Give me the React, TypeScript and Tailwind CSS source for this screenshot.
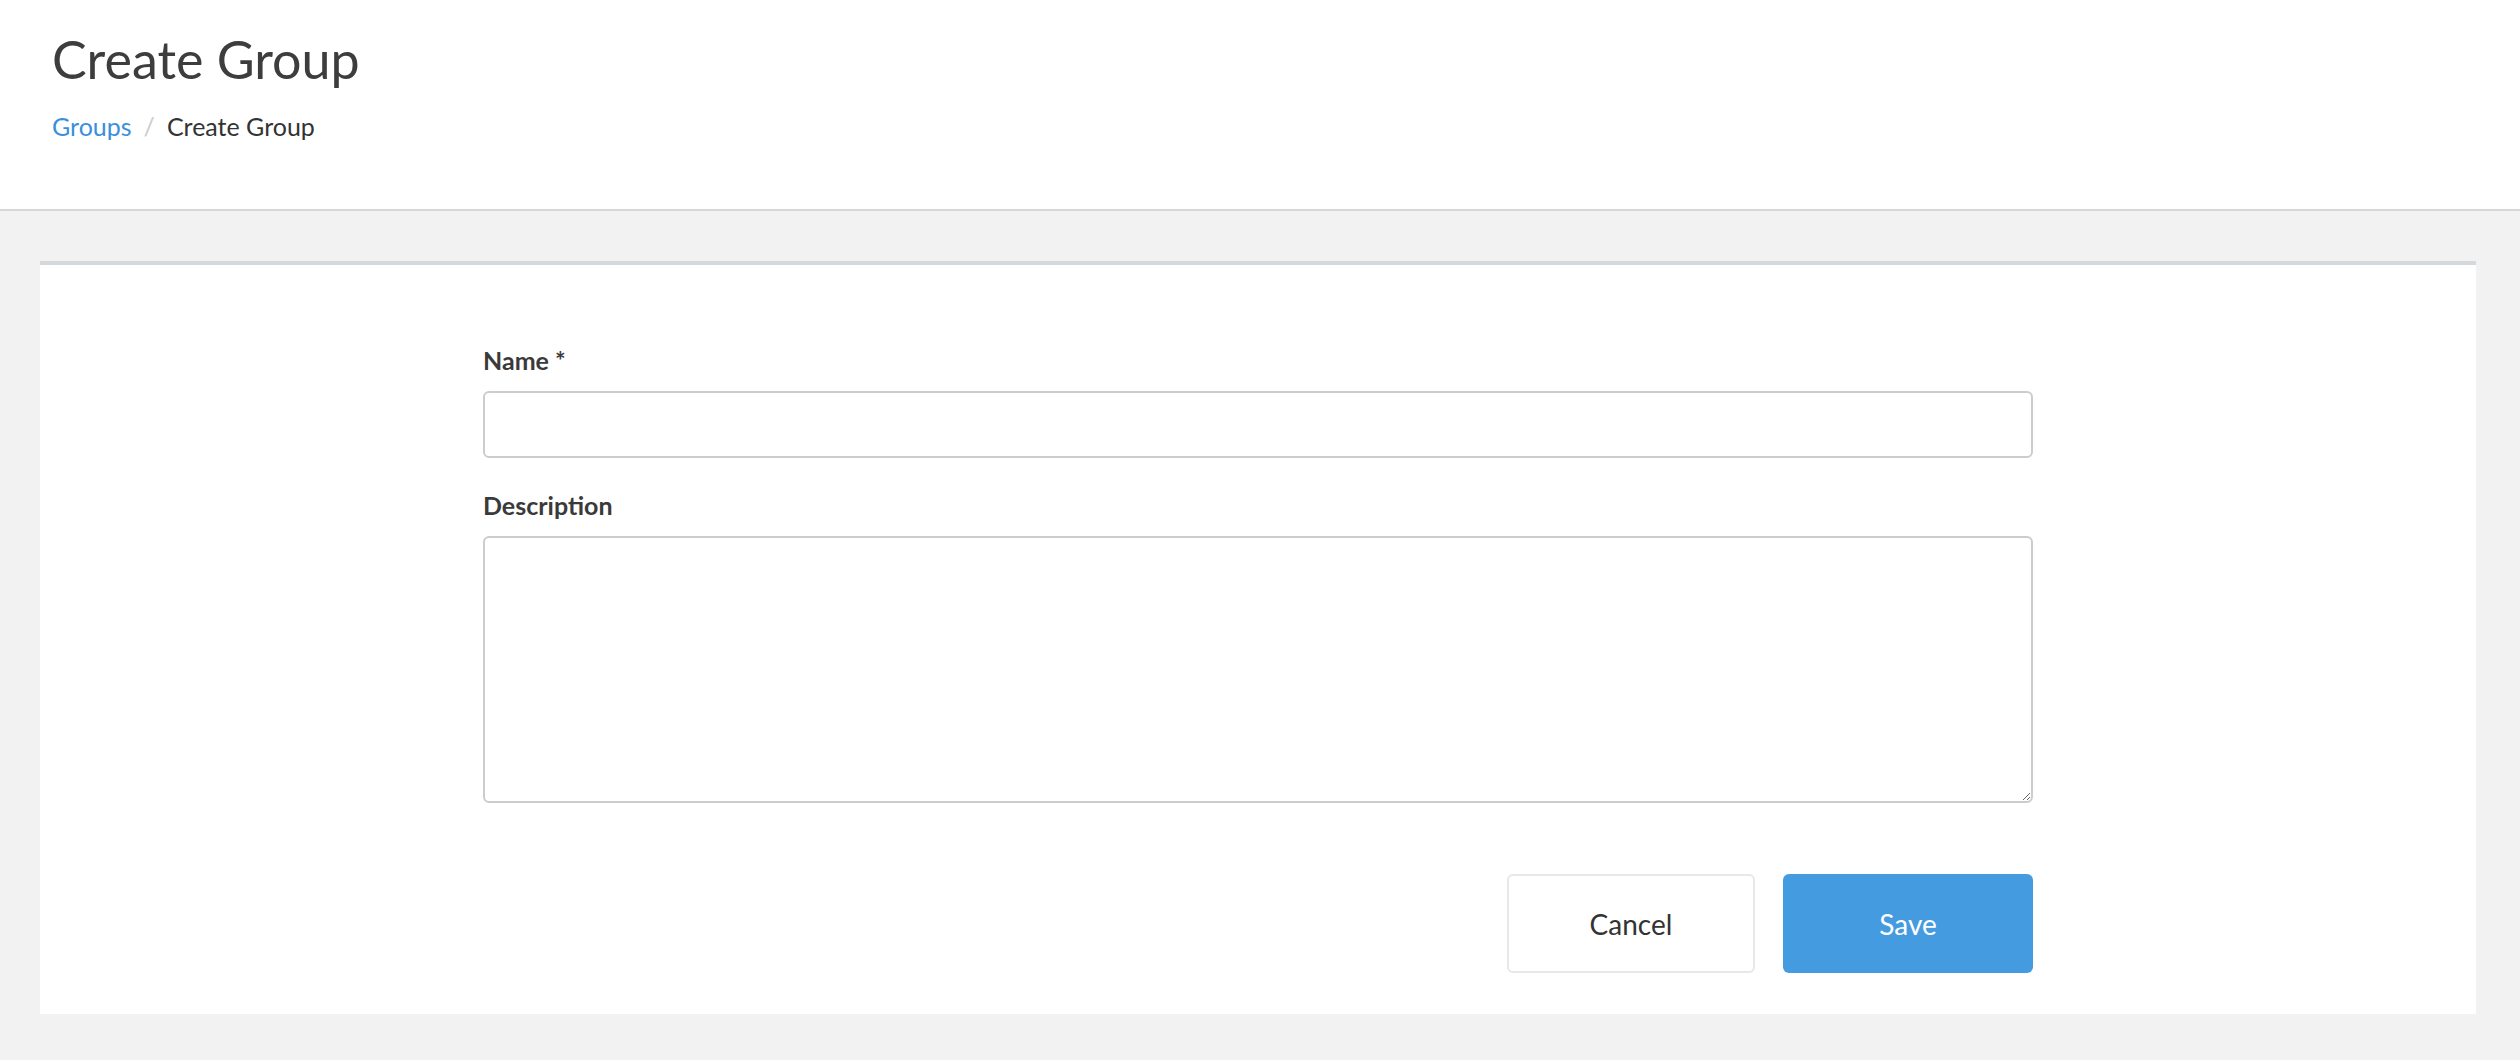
export default function App() {
  return (
    <div className="min-h-screen bg-[#f2f2f2] font-['Lato','Liberation_Sans',sans-serif] text-[#333]">
      {/* Header */}
      <div className="h-[211px] border-b-2 border-[#d5d8db] bg-white pl-[52px] pt-[33px]">
        <h1 className="text-[52px] leading-none font-normal text-[#3d3d3d]">Create Group</h1>
        <div className="mt-[29px] flex items-center gap-[12px] text-[25px] leading-none">
          <a href="#" className="text-[#3b8fdb]">Groups</a>
          <span className="text-[#cccccc]">/</span>
          <span className="text-[#333]">Create Group</span>
        </div>
      </div>

      {/* Body */}
      <div className="pl-[40px] pr-[44px] pt-[50px] pb-[46px]">
        <div className="border-t-4 border-[#d6d9dc] bg-white px-[443px] pt-[83px] pb-[41px]">
          <label className="block text-[25px] leading-none font-bold text-[#3a3a3a]">Name *</label>
          <input
            type="text"
            className="mt-[18px] block h-[67px] w-full rounded-[6px] border-2 border-[#cccccc] bg-white px-4 text-[25px] outline-none"
          />
          <label className="mt-[35px] block text-[25px] leading-none font-bold text-[#3a3a3a]">Description</label>
          <textarea className="mt-[18px] block h-[267px] w-full rounded-[6px] border-2 border-[#cccccc] bg-white px-4 py-3 text-[25px] outline-none" />

          <div className="mt-[71px] flex justify-end gap-[28px]">
            <button className="h-[99px] w-[248px] rounded-[6px] border-2 border-[#e8e8e8] bg-white text-[28px] text-[#333]">
              Cancel
            </button>
            <button className="h-[99px] w-[250px] rounded-[6px] bg-[#449be0] text-[28px] text-white">
              Save
            </button>
          </div>
        </div>
      </div>
    </div>
  )
}
